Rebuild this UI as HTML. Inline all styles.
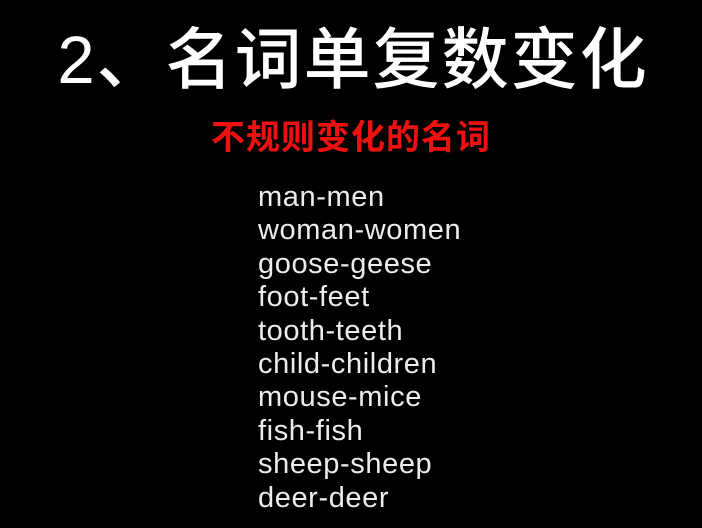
<!DOCTYPE html>
<html><head><meta charset="utf-8"><style>
html,body{margin:0;padding:0;background:#000;width:702px;height:528px;overflow:hidden}
.t{position:absolute;left:0;width:702px;top:16px;text-align:center;color:#fff;font:500 67px/90px "Liberation Sans","Noto Sans CJK SC",sans-serif;letter-spacing:2px;padding-left:2px}
.s{position:absolute;left:0;width:702px;top:116px;text-align:center;color:#ee1111;font:bold 34px/44px "Liberation Sans","Noto Sans CJK SC",sans-serif;letter-spacing:1px}
.l{position:absolute;left:258px;top:181px;color:#ececec;font:29px/33.4px "Liberation Sans",sans-serif;letter-spacing:0.6px}
</style></head><body>
<div class="t">2、名词单复数变化</div>
<div class="s">不规则变化的名词</div>
<div class="l">man-men<br>woman-women<br>goose-geese<br>foot-feet<br>tooth-teeth<br>child-children<br>mouse-mice<br>fish-fish<br>sheep-sheep<br>deer-deer</div>
</body></html>
